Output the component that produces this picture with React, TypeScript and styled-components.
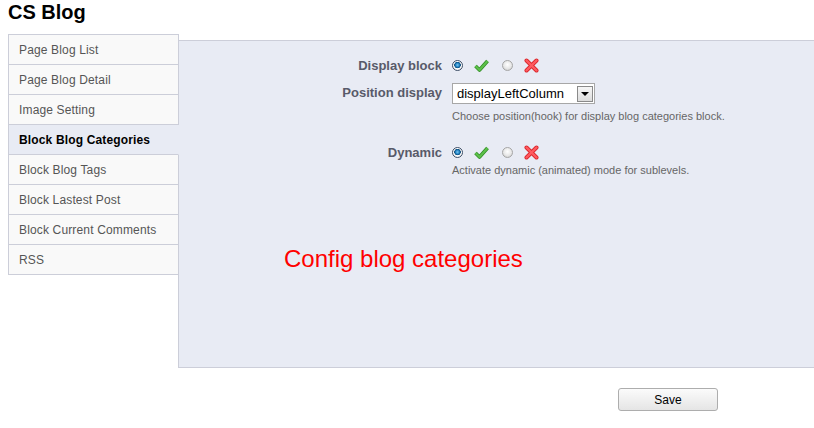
import React from "react";
import styled, { createGlobalStyle } from "styled-components";

const Global = createGlobalStyle`
  body { margin: 0; background: #fff; font-family: Arial, "Liberation Sans", sans-serif; }
`;

const Page = styled.div`
  padding: 0 0 0 8px;
  width: 814px;
  box-sizing: border-box;
`;

const Title = styled.h1`
  margin: 0;
  height: 34px;
  font-size: 20px;
  font-weight: bold;
  color: #000;
  line-height: 24px;
`;

const Body = styled.div`
  display: flex;
  align-items: flex-start;
`;

const Menu = styled.ul`
  list-style: none;
  margin: 0 -1px 0 0;
  padding: 0;
  width: 171px;
  position: relative;
  z-index: 1;
  border-top: 1px solid #ccced9;
`;

const MenuItem = styled.li<{ $active?: boolean }>`
  box-sizing: border-box;
  height: 30px;
  line-height: 28px;
  padding: 1px 0 0 10px;
  font-size: 12px;
  letter-spacing: 0.15px;
  color: ${(p) => (p.$active ? "#000" : "#555")};
  font-weight: ${(p) => (p.$active ? "bold" : "normal")};
  background: ${(p) => (p.$active ? "#e8ebf4" : "#f9f9f9")};
  border-left: 1px solid #ccced9;
  border-right: 1px solid ${(p) => (p.$active ? "#e8ebf4" : "#ccced9")};
  border-bottom: 1px solid #ccced9;
`;

const Panel = styled.div`
  flex: 1;
  margin-top: 6px;
  height: 328px;
  box-sizing: border-box;
  background: #e8ebf4;
  border: 1px solid #ccced9;
  border-right: none;
  padding-top: 15px;
`;

const Row = styled.div<{ $mt?: number }>`
  display: grid;
  grid-template-columns: 263px 1fr;
  column-gap: 10px;
  margin-top: ${(p) => p.$mt ?? 0}px;
`;

const Label = styled.label`
  text-align: right;
  font-size: 13px;
  font-weight: bold;
  color: #585a69;
  line-height: 16px;
  padding-top: 2px;
`;

const Field = styled.div`
  display: flex;
  flex-direction: column;
`;

const Choices = styled.div`
  display: flex;
  align-items: center;
  height: 18px;
`;

const Radio = styled.span<{ $on?: boolean }>`
  width: 11px;
  height: 11px;
  border-radius: 50%;
  box-sizing: border-box;
  border: 1px solid ${(p) => (p.$on ? "#3d4e66" : "#a5a5a5")};
  background: ${(p) =>
    p.$on
      ? "radial-gradient(circle at 50% 45%, #7cc8f0 0, #1f7fbf 2px, #0a4a7a 3px, #fff 3.5px, #f0f0f0 5px)"
      : "radial-gradient(circle at 50% 40%, #fff 0, #e6e6e6 4px, #cfcfcf 6px)"};
  margin-right: 11px;
`;

const IconBox = styled.span`
  display: inline-flex;
  width: 15px;
  height: 15px;
  margin-right: 13px;
`;

const Check = () => (
  <IconBox>
    <svg width="15" height="15" viewBox="0 0 15 15">
      <path d="M1.5 8 L5.5 12 L13.5 3" fill="none" stroke="#2e8a22" strokeWidth="3.6" strokeLinejoin="round" />
      <path d="M1.5 8 L5.5 12 L13.5 3" fill="none" stroke="#5cc04a" strokeWidth="2.2" strokeLinejoin="round" />
    </svg>
  </IconBox>
);

const Cross = () => (
  <IconBox>
    <svg width="15" height="15" viewBox="0 0 15 15">
      <path d="M2.5 2.5 L12.5 12.5 M12.5 2.5 L2.5 12.5" stroke="#d9262b" strokeWidth="4" strokeLinecap="round" />
      <path d="M2.5 2.5 L12.5 12.5 M12.5 2.5 L2.5 12.5" stroke="#ff5a5f" strokeWidth="2.4" strokeLinecap="round" />
    </svg>
  </IconBox>
);

const Select = styled.div`
  display: flex;
  align-items: center;
  justify-content: space-between;
  width: 143px;
  height: 21px;
  box-sizing: border-box;
  border: 1px solid #a7a7a7;
  background: #fff;
  padding: 0 1px 0 4px;
  font-size: 13px;
  color: #000;
  font-family: Arial, "Liberation Sans", sans-serif;
`;

const Arrow = styled.span`
  width: 16px;
  height: 16px;
  box-sizing: border-box;
  border: 1px solid #8a8a8a;
  background: linear-gradient(#f6f6f6, #dcdcdc);
  display: flex;
  align-items: center;
  justify-content: center;
  &::after {
    content: "";
    border-left: 4px solid transparent;
    border-right: 4px solid transparent;
    border-top: 4px solid #000;
    margin-top: 1px;
  }
`;

const Help = styled.p<{ $mt?: number }>`
  margin: ${(p) => p.$mt ?? 6}px 0 0;
  font-size: 11px;
  color: #666;
  line-height: 13px;
`;

const Notice = styled.div`
  margin: 68px 0 0 105px;
  font-size: 24px;
  color: #ff0000;
  line-height: 28px;
`;

const Footer = styled.div`
  display: flex;
  padding: 20px 0 0 610px;
`;

const SaveButton = styled.button`
  width: 100px;
  height: 23px;
  border: 1px solid #adadad;
  border-radius: 3px;
  background: linear-gradient(#fbfbfb, #e5e5e5);
  font-family: Arial, "Liberation Sans", sans-serif;
  font-size: 12px;
  color: #000;
  padding: 0;
`;

const items = [
  "Page Blog List",
  "Page Blog Detail",
  "Image Setting",
  "Block Blog Categories",
  "Block Blog Tags",
  "Block Lastest Post",
  "Block Current Comments",
  "RSS",
];

const YesNo = () => (
  <Choices>
    <Radio $on />
    <Check />
    <Radio />
    <Cross />
  </Choices>
);

export default function App() {
  return (
    <Page>
      <Global />
      <Title>CS Blog</Title>
      <Body>
        <Menu>
          {items.map((it, i) => (
            <MenuItem key={it} $active={i === 3}>
              {it}
            </MenuItem>
          ))}
        </Menu>
        <Panel>
          <Row>
            <Label>Display block</Label>
            <Field>
              <YesNo />
            </Field>
          </Row>
          <Row $mt={9}>
            <Label>Position display</Label>
            <Field>
              <Select>
                displayLeftColumn
                <Arrow />
              </Select>
              <Help>Choose position(hook) for display blog categories block.</Help>
            </Field>
          </Row>
          <Row $mt={20}>
            <Label>Dynamic</Label>
            <Field>
              <YesNo />
              <Help $mt={3}>Activate dynamic (animated) mode for sublevels.</Help>
            </Field>
          </Row>
          <Notice>Config blog categories</Notice>
        </Panel>
      </Body>
      <Footer>
        <SaveButton>Save</SaveButton>
      </Footer>
    </Page>
  );
}
